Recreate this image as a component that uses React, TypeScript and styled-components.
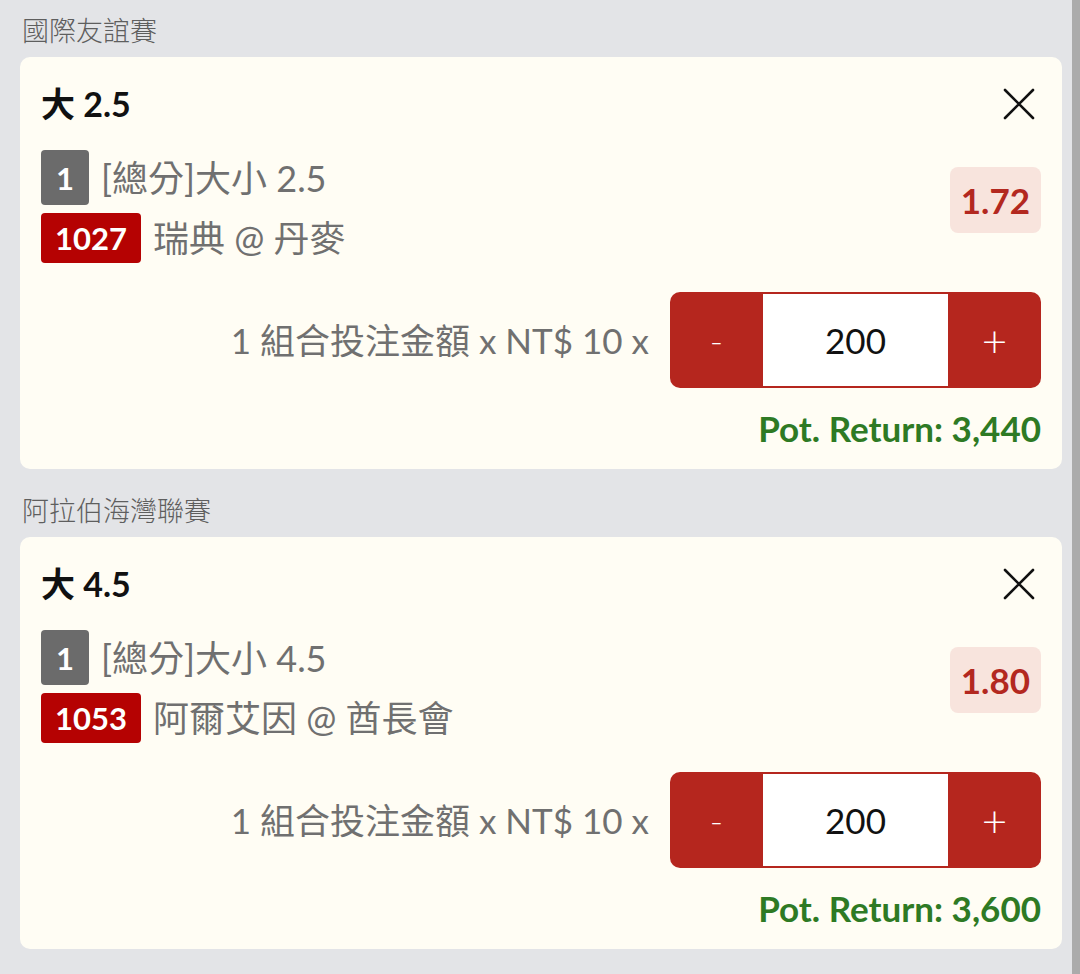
import React from "react";
import styled, { createGlobalStyle } from "styled-components";

const GlobalStyle = createGlobalStyle`
  html, body { margin: 0; padding: 0; background: #e3e4e7; }
  body { font-family: Lato, "Noto Sans CJK TC", sans-serif; }
  * { box-sizing: border-box; }
`;

const Page = styled.div`
  display: flex;
  width: 1080px;
  height: 974px;
  overflow: hidden;
  background: #e3e4e7;
`;

const Content = styled.div`
  flex: 1;
  display: flex;
  flex-direction: column;
  gap: 23px;
  padding: 12px 10px 0 20px;
`;

const ScrollBar = styled.div`
  width: 8px;
  height: 100%;
  background: #ababab;
`;

const Section = styled.section`
  display: flex;
  flex-direction: column;
  gap: 9px;
`;

const LeagueTitle = styled.div`
  font-family: "Noto Sans CJK TC", Lato, sans-serif;
  font-size: 27px;
  font-weight: 300;
  line-height: 36px;
  color: #5e5e5e;
  padding-left: 2px;
`;

const Card = styled.div`
  background: #fffdf4;
  border-radius: 10px;
  padding: 27px 21px 21px 21px;
  display: flex;
  flex-direction: column;
`;

const TitleRow = styled.div`
  display: flex;
  justify-content: space-between;
  align-items: center;
  height: 40px;
`;

const BetTitle = styled.div`
  font-family: Lato, "Noto Sans CJK TC", sans-serif;
  font-weight: 700;
  font-size: 34px;
  color: #111;
  line-height: 40px;
`;

const CloseButton = styled.button`
  border: none;
  background: transparent;
  padding: 0;
  width: 34px;
  height: 34px;
  margin-right: 5px;
  display: flex;
  align-items: center;
  justify-content: center;
  cursor: pointer;
`;

const SelectionRow = styled.div`
  margin-top: 26px;
  display: flex;
  justify-content: space-between;
  align-items: center;
`;

const Lines = styled.div`
  display: flex;
  flex-direction: column;
  gap: 8px;
`;

const Line = styled.div`
  display: flex;
  align-items: center;
  gap: 12px;
`;

const Badge = styled.span<{ $tone: "gray" | "red" }>`
  display: inline-flex;
  align-items: center;
  justify-content: center;
  min-width: 48px;
  height: ${(p) => (p.$tone === "gray" ? "55px" : "50px")};
  padding: 0 ${(p) => (p.$tone === "gray" ? "0" : "14px")};
  border-radius: 4px;
  background: ${(p) => (p.$tone === "gray" ? "#6b6b6b" : "#b50202")};
  color: #fff;
  font-family: Lato, sans-serif;
  font-weight: 700;
  font-size: 31px;
`;

const LineText = styled.span`
  font-family: Lato, "Noto Sans CJK TC", sans-serif;
  font-size: 36px;
  color: #707070;
  line-height: 44px;
`;

const Odds = styled.div`
  background: #f8e4dd;
  border-radius: 8px;
  padding: 0 11px;
  height: 66px;
  display: flex;
  align-items: center;
  font-family: Lato, sans-serif;
  font-weight: 700;
  font-size: 35px;
  color: #b3281f;
  margin-bottom: 13px;
`;

const StakeRow = styled.div`
  margin-top: 29px;
  display: flex;
  justify-content: flex-end;
  align-items: center;
  gap: 21px;
`;

const StakeLabel = styled.span`
  font-family: Lato, "Noto Sans CJK TC", sans-serif;
  font-size: 35px;
  color: #707070;
  margin-top: -3px;
`;

const Stepper = styled.div`
  display: flex;
  width: 371px;
  height: 96px;
  background: #b5261e;
  border-radius: 10px;
  padding: 2px 0;
`;

const StepButton = styled.button<{ $big?: boolean }>`
  width: 93px;
  border: none;
  background: transparent;
  color: #fff;
  font-family: Lato, sans-serif;
  font-size: ${(p) => (p.$big ? "44px" : "36px")};
  font-weight: 300;
  display: flex;
  align-items: center;
  justify-content: center;
  padding: 0;
`;

const StakeValue = styled.div`
  flex: 1;
  background: #fff;
  display: flex;
  align-items: center;
  justify-content: center;
  font-family: Lato, sans-serif;
  font-size: 35px;
  color: #111;
`;

const PotReturn = styled.div`
  margin-top: 20px;
  text-align: right;
  font-family: Lato, sans-serif;
  font-weight: 700;
  font-size: 35px;
  line-height: 40px;
  color: #2e7a24;
`;

const CloseIcon = () => (
  <svg width="34" height="34" viewBox="0 0 34 34">
    <path d="M3 3 L31 31 M31 3 L3 31" stroke="#111" strokeWidth="2.6" strokeLinecap="round" />
  </svg>
);

type Bet = {
  league: string;
  title: string;
  market: string;
  code: string;
  match: string;
  odds: string;
  stake: string;
  ret: string;
};

const bets: Bet[] = [
  {
    league: "國際友誼賽",
    title: "大 2.5",
    market: "[總分]大小 2.5",
    code: "1027",
    match: "瑞典 @ 丹麥",
    odds: "1.72",
    stake: "200",
    ret: "3,440",
  },
  {
    league: "阿拉伯海灣聯賽",
    title: "大 4.5",
    market: "[總分]大小 4.5",
    code: "1053",
    match: "阿爾艾因 @ 酋長會",
    odds: "1.80",
    stake: "200",
    ret: "3,600",
  },
];

export default function App() {
  return (
    <>
      <GlobalStyle />
      <Page>
        <Content>
          {bets.map((b) => (
            <Section key={b.code}>
              <LeagueTitle>{b.league}</LeagueTitle>
              <Card>
                <TitleRow>
                  <BetTitle>{b.title}</BetTitle>
                  <CloseButton aria-label="close">
                    <CloseIcon />
                  </CloseButton>
                </TitleRow>
                <SelectionRow>
                  <Lines>
                    <Line>
                      <Badge $tone="gray">1</Badge>
                      <LineText>{b.market}</LineText>
                    </Line>
                    <Line>
                      <Badge $tone="red">{b.code}</Badge>
                      <LineText>{b.match}</LineText>
                    </Line>
                  </Lines>
                  <Odds>{b.odds}</Odds>
                </SelectionRow>
                <StakeRow>
                  <StakeLabel>1 組合投注金額 x NT$ 10 x</StakeLabel>
                  <Stepper>
                    <StepButton>-</StepButton>
                    <StakeValue>{b.stake}</StakeValue>
                    <StepButton $big>+</StepButton>
                  </Stepper>
                </StakeRow>
                <PotReturn>Pot. Return: {b.ret}</PotReturn>
              </Card>
            </Section>
          ))}
        </Content>
        <ScrollBar />
      </Page>
    </>
  );
}
